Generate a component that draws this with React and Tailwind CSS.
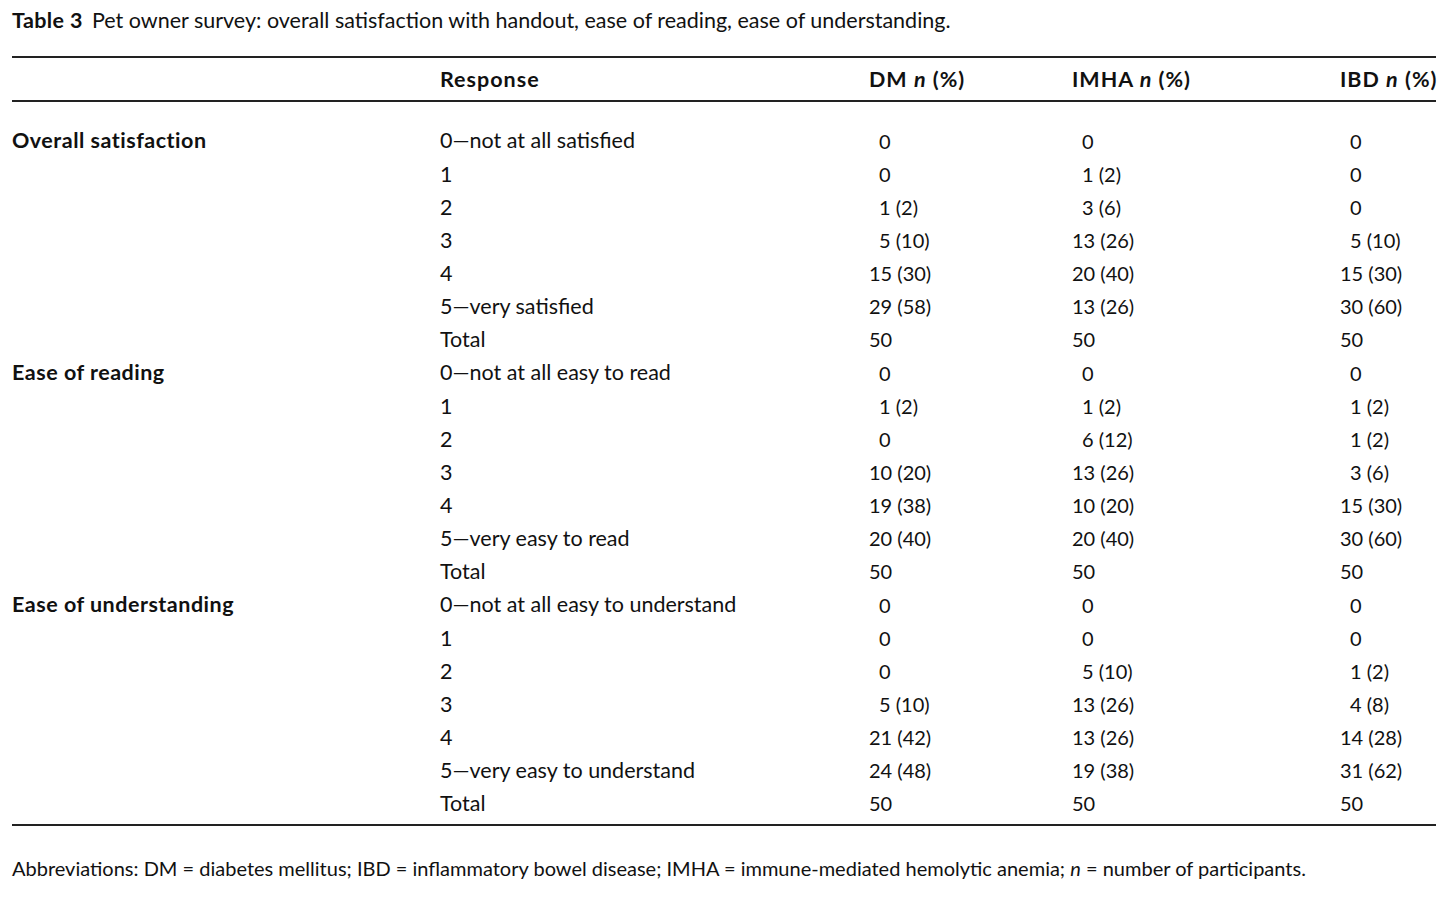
const groups = [
  {
    label: 'Overall satisfaction',
    rows: [
      ['0—not at all satisfied', '0', '0', '0'],
      ['1', '0', '1 (2)', '0'],
      ['2', '1 (2)', '3 (6)', '0'],
      ['3', '5 (10)', '13 (26)', '5 (10)'],
      ['4', '15 (30)', '20 (40)', '15 (30)'],
      ['5—very satisfied', '29 (58)', '13 (26)', '30 (60)'],
      ['Total', '50', '50', '50'],
    ],
  },
  {
    label: 'Ease of reading',
    rows: [
      ['0—not at all easy to read', '0', '0', '0'],
      ['1', '1 (2)', '1 (2)', '1 (2)'],
      ['2', '0', '6 (12)', '1 (2)'],
      ['3', '10 (20)', '13 (26)', '3 (6)'],
      ['4', '19 (38)', '10 (20)', '15 (30)'],
      ['5—very easy to read', '20 (40)', '20 (40)', '30 (60)'],
      ['Total', '50', '50', '50'],
    ],
  },
  {
    label: 'Ease of understanding',
    rows: [
      ['0—not at all easy to understand', '0', '0', '0'],
      ['1', '0', '0', '0'],
      ['2', '0', '5 (10)', '1 (2)'],
      ['3', '5 (10)', '13 (26)', '4 (8)'],
      ['4', '21 (42)', '13 (26)', '14 (28)'],
      ['5—very easy to understand', '24 (48)', '19 (38)', '31 (62)'],
      ['Total', '50', '50', '50'],
    ],
  },
];

// single-digit counts sit one figure to the right, except totals
function Num({ value, total }) {
  const pad = !total && /^\d[ (]|^\d$/.test(value);
  return <div className={`text-[20px] ${pad ? 'pl-[10px]' : ''}`}>{value}</div>;
}

const cols = 'grid grid-cols-[428px_429px_203px_268px_1fr]';

export default function App() {
  return (
    <div className="min-h-screen bg-white text-[#111] font-['Lato',sans-serif] text-[21.5px]">
      <div className="pl-3 pr-5">
        <div className="pt-[6px] h-[34px] leading-[28px]">
          <span className="font-bold tracking-[0.4px]">Table 3</span>
          <span className="ml-[9px]">Pet owner survey: overall satisfaction with handout, ease of reading, ease of understanding.</span>
        </div>
        <div className="mt-[22px] border-t-2 border-[#222]" />
        <div className={`${cols} h-[42px] items-center font-bold tracking-[1px] whitespace-nowrap`}>
          <div />
          <div>Response</div>
          <div>DM <i>n</i> (%)</div>
          <div>IMHA <i>n</i> (%)</div>
          <div>IBD <i>n</i> (%)</div>
        </div>
        <div className="border-t-2 border-[#222]" />
        <div className="pt-[22px] pb-[4px]">
          {groups.map((g) =>
            g.rows.map((r, i) => (
              <div key={g.label + i} className={`${cols} h-[33.15px] items-center whitespace-nowrap`}>
                <div className="font-bold tracking-[0.5px]">{i === 0 ? g.label : ''}</div>
                <div>{r[0]}</div>
                <Num value={r[1]} total={r[0] === 'Total'} />
                <Num value={r[2]} total={r[0] === 'Total'} />
                <Num value={r[3]} total={r[0] === 'Total'} />
              </div>
            ))
          )}
        </div>
        <div className="border-t-2 border-[#222]" />
        <div className="mt-[28px] leading-[28px] text-[20px]">
          Abbreviations: DM = diabetes mellitus; IBD = inflammatory bowel disease; IMHA = immune-mediated hemolytic anemia; <i>n</i> = number of participants.
        </div>
      </div>
    </div>
  );
}
